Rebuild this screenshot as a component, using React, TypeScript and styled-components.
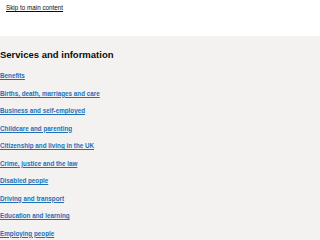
import React from "react";
import styled, { createGlobalStyle } from "styled-components";

const Global = createGlobalStyle`
  html, body { margin: 0; padding: 0; background: #ffffff; }
  body { font-family: "Liberation Sans", Arial, sans-serif; color: #0b0c0c; }
`;

const TopBar = styled.div`
  height: 36px;
  padding: 3px 6px 0;
  box-sizing: border-box;
  background: #ffffff;
  font-size: 6.3px;
  line-height: 9px;
`;

const SkipLink = styled.a`
  color: #0b0c0c;
  text-decoration: underline;
  text-decoration-thickness: 0.5px;
  text-underline-offset: 1px;
`;

const Section = styled.section`
  background: #f3f2f1;
  padding: 13px 0 20px;
  min-height: 204px;
`;

const Heading = styled.h2`
  margin: 0 0 6px;
  font-size: 9.5px;
  line-height: 12px;
  font-weight: 700;
  color: #0b0c0c;
`;

const List = styled.ul`
  list-style: none;
  margin: 0;
  padding: 0;
  display: flex;
  flex-direction: column;
  font-size: 6.3px;
`;

const Item = styled.li`
  height: 17.5px;
  line-height: 17.5px;
`;

const Link = styled.a`
  font-weight: 700;
  color: #1d70b8;
  text-decoration: underline;
  text-decoration-thickness: 0.5px;
  text-underline-offset: 1px;
`;

const links = [
  "Benefits",
  "Births, death, marriages and care",
  "Business and self-employed",
  "Childcare and parenting",
  "Citizenship and living in the UK",
  "Crime, justice and the law",
  "Disabled people",
  "Driving and transport",
  "Education and learning",
  "Employing people",
];

export default function App() {
  return (
    <>
      <Global />
      <TopBar>
        <SkipLink href="#main">Skip to main content</SkipLink>
      </TopBar>
      <Section>
        <Heading>Services and information</Heading>
        <List>
          {links.map((l) => (
            <Item key={l}>
              <Link href="#">{l}</Link>
            </Item>
          ))}
        </List>
      </Section>
    </>
  );
}
